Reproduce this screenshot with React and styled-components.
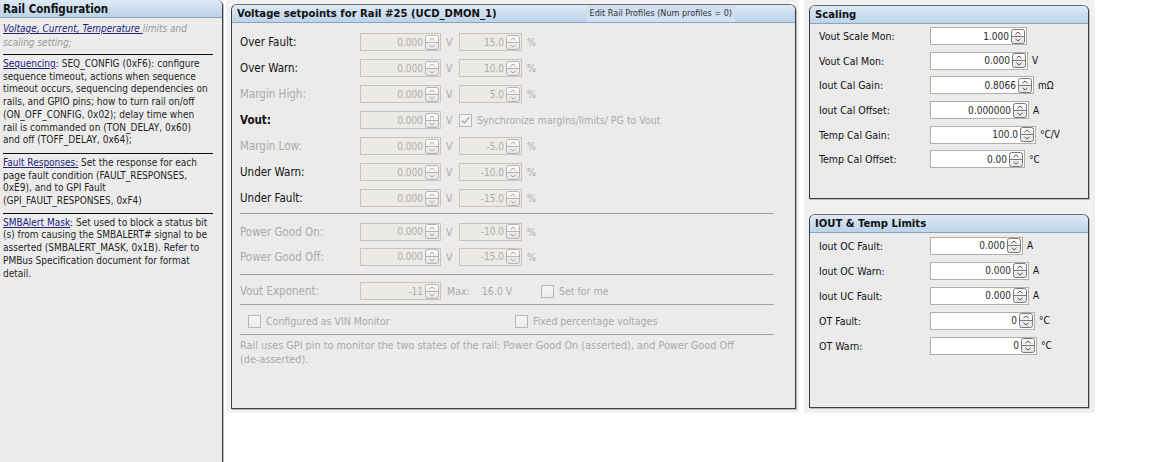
import styled, { createGlobalStyle } from "styled-components";

const GlobalStyle = createGlobalStyle`
  html, body { margin: 0; padding: 0; background: #fff; }
  body {
    font-family: "DejaVu Sans Condensed", "DejaVu Sans", sans-serif;
    font-size: 10px;
    color: #1a1a1a;
  }
`;

const Arrows = ({ disabled }) => {
  const c = disabled ? "#b4b4b4" : "#7a7a7a";
  const a = disabled ? "#a8a8a8" : "#555";
  const id = disabled ? "sgd" : "sge";
  return (
    <svg width="14" height="15" viewBox="0 0 14 15">
      <defs>
        <linearGradient id={id} x1="0" y1="0" x2="0" y2="1">
          <stop offset="0" stopColor="#fdfdfd" />
          <stop offset="1" stopColor="#e2e2e2" />
        </linearGradient>
      </defs>
      <rect x="0.5" y="0.5" width="13" height="14" rx="2" fill={`url(#${id})`} stroke={c} />
      <line x1="1" y1="7.5" x2="13" y2="7.5" stroke={c} />
      <path d="M4.5 5.2 L7 3 L9.5 5.2" fill="none" stroke={a} strokeWidth="1" />
      <path d="M4.5 9.8 L7 12 L9.5 9.8" fill="none" stroke={a} strokeWidth="1" />
    </svg>
  );
};

const Spin = ({ value, width, disabled }) => (
  <SpinBox $w={width} $disabled={disabled}>
    <span>{value}</span>
    <Arrows disabled={disabled} />
  </SpinBox>
);

const Check = ({ checked }) => (
  <CheckBox>
    {checked && (
      <svg width="11" height="11" viewBox="0 0 11 11">
        <path d="M2 5.5 L4.5 8 L9 2.5" fill="none" stroke="#a8a8a8" strokeWidth="1.3" />
      </svg>
    )}
  </CheckBox>
);

const voltRows = [
  { label: "Over Fault:", pct: "15.0" },
  { label: "Over Warn:", pct: "10.0" },
  { label: "Margin High:", pct: "5.0", off: true },
  { label: "Vout:", vout: true },
  { label: "Margin Low:", pct: "-5.0", off: true },
  { label: "Under Warn:", pct: "-10.0" },
  { label: "Under Fault:", pct: "-15.0" },
];

const pgRows = [
  { label: "Power Good On:", pct: "-10.0" },
  { label: "Power Good Off:", pct: "-15.0" },
];

const scaling = [
  { label: "Vout Scale Mon:", value: "1.000", w: 97, unit: "" },
  { label: "Vout Cal Mon:", value: "0.000", w: 98, unit: "V" },
  { label: "Iout Cal Gain:", value: "0.8066", w: 104, unit: "mΩ" },
  { label: "Iout Cal Offset:", value: "0.000000", w: 99, unit: "A" },
  { label: "Temp Cal Gain:", value: "100.0", w: 106, unit: "°C/V" },
  { label: "Temp Cal Offset:", value: "0.00", w: 95, unit: "°C" },
];

const limits = [
  { label: "Iout OC Fault:", value: "0.000", w: 93, unit: "A" },
  { label: "Iout OC Warn:", value: "0.000", w: 99, unit: "A" },
  { label: "Iout UC Fault:", value: "0.000", w: 99, unit: "A" },
  { label: "OT Fault:", value: "0", w: 105, unit: "°C" },
  { label: "OT Warn:", value: "0", w: 107, unit: "°C" },
];

const App = () => {
  return (
    <>
      <GlobalStyle />
      <Page>
        <LeftPanel>
          <Header>Rail Configuration</Header>
          <LeftBody>
            <Note $lh={14} $pb={4}>
              <Italic>
                <Link>Voltage, Current, Temperature </Link>
                <Faint>limits and scaling setting;</Faint>
              </Italic>
            </Note>
            <Rule />
            <Note>
              <Link>Sequencing</Link>: SEQ_CONFIG (0xF6): configure sequence
              timeout, actions when sequence timeout occurs, sequencing
              dependencies on rails, and GPIO pins; how to turn rail on/off
              (ON_OFF_CONFIG, 0x02); delay time when rail is commanded on
              (TON_DELAY, 0x60) and off (TOFF_DELAY, 0x64);
            </Note>
            <Rule />
            <Note $pb={5}>
              <Link>Fault Responses:</Link> Set the response for each page
              fault condition (FAULT_RESPONSES, 0xE9), and to GPI Fault
              (GPI_FAULT_RESPONSES, 0xF4)
            </Note>
            <Rule />
            <Note>
              <Link>SMBAlert Mask</Link>: Set used to block a status bit (s)
              from causing the SMBALERT# signal to be asserted (SMBALERT_MASK,
              0x1B). Refer to PMBus Specification document for format detail.
            </Note>
          </LeftBody>
        </LeftPanel>

        <MiddleArea>
          <Panel $w={565} $h={405}>
            <Header>
              <span>Voltage setpoints for Rail #25 (UCD_DMON_1)</span>
              <HeaderButton>Edit Rail Profiles (Num profiles = 0)</HeaderButton>
            </Header>
            <VoltBody>
              {voltRows.map((r) => (
                <VRow key={r.label}>
                  <VLabel $off={r.off} $bold={r.vout}>{r.label}</VLabel>
                  <Spin value="0.000" width={81} disabled />
                  <Unit $off>V</Unit>
                  {r.vout ? (
                    <CheckLine $off>
                      <Check checked />
                      Synchronize margins/limits/ PG to Vout
                    </CheckLine>
                  ) : (
                    <>
                      <Spin value={r.pct} width={63} disabled />
                      <Unit $off>%</Unit>
                    </>
                  )}
                </VRow>
              ))}
              <Separator $mt={2} $mb={5} />
              {pgRows.map((r) => (
                <VRow key={r.label} $h={25}>
                  <VLabel $off>{r.label}</VLabel>
                  <Spin value="0.000" width={81} disabled />
                  <Unit $off>V</Unit>
                  <Spin value={r.pct} width={63} disabled />
                  <Unit $off>%</Unit>
                </VRow>
              ))}
              <Separator $mt={5} $mb={4} />
              <VRow $h={24}>
                <VLabel $off>Vout Exponent:</VLabel>
                <Spin value="-11" width={81} disabled />
                <MaxText>
                  <span>Max:</span>
                  <span>16.0 V</span>
                </MaxText>
                <CheckLine $off>
                  <Check />
                  Set for me
                </CheckLine>
              </VRow>
              <Separator $mt={1} $mb={4} />
              <OptionRow>
                <CheckLine $off $w={267}>
                  <Check />
                  Configured as VIN Monitor
                </CheckLine>
                <CheckLine $off>
                  <Check />
                  Fixed percentage voltages
                </CheckLine>
              </OptionRow>
              <Separator $mt={1} $mb={4} />
              <Remark>
                Rail uses GPI pin to monitor the two states of the rail: Power
                Good On (asserted), and Power Good Off{" "}
                <NoWrap>(de-asserted).</NoWrap>
              </Remark>
            </VoltBody>
          </Panel>
        </MiddleArea>

        <RightArea>
          <Panel $w={280} $h={194}>
            <Header>Scaling</Header>
            <FormBody>
              {scaling.map((r) => (
                <FRow key={r.label} $h={24.6}>
                  <FLabel>{r.label}</FLabel>
                  <Spin value={r.value} width={r.w} />
                  <FUnit>{r.unit}</FUnit>
                </FRow>
              ))}
            </FormBody>
          </Panel>
          <Panel $w={280} $h={194}>
            <Header>IOUT &amp; Temp Limits</Header>
            <FormBody>
              {limits.map((r) => (
                <FRow key={r.label}>
                  <FLabel>{r.label}</FLabel>
                  <Spin value={r.value} width={r.w} />
                  <FUnit>{r.unit}</FUnit>
                </FRow>
              ))}
            </FormBody>
          </Panel>
        </RightArea>
      </Page>
    </>
  );
};

const Page = styled.div`
  display: flex;
  align-items: flex-start;
  width: 1153px;
  height: 462px;
  overflow: hidden;
  background: #fff;
`;

const Header = styled.div`
  display: flex;
  align-items: center;
  justify-content: space-between;
  height: 18px;
  padding-left: 5px;
  box-sizing: border-box;
  background: linear-gradient(#dde9f6, #bcd3ea);
  border-bottom: 1px solid #8aa3bb;
  font-weight: bold;
  font-size: 11.2px;
  color: #111;
  border-top-left-radius: 5px;
  border-top-right-radius: 5px;
`;

const HeaderButton = styled.span`
  font-weight: normal;
  font-size: 9px;
  color: #333;
  height: 17px;
  line-height: 17px;
  padding: 0 3px;
  margin-right: 60px;
  background: #cfe0f1;
`;

const LeftPanel = styled.section`
  width: 222px;
  height: 462px;
  flex-shrink: 0;
  background: #ececec;
  border-right: 1px solid #3c3c3c;
  box-shadow: 1px 0 0 #bdbdbd;
  border-top-right-radius: 6px;
  ${Header} {
    border-top-left-radius: 0;
    font-size: 11.5px;
    padding-left: 3px;
  }
`;

const LeftBody = styled.div`
  padding: 4px 12px 0 3px;
`;

const Note = styled.p`
  margin: 0;
  padding: 0 0 ${(p) => p.$pb ?? 6}px;
  line-height: ${(p) => p.$lh || 12.7}px;
  font-size: 10px;
  color: #1e1e1e;
`;

const Italic = styled.span`
  font-style: italic;
`;

const Link = styled.span`
  color: #22227a;
  text-decoration: underline;
`;

const Faint = styled.span`
  color: #9a9a9a;
`;

const Rule = styled.hr`
  margin: 0 0 3px;
  border: none;
  border-top: 1px solid #111;
  width: 210px;
`;

const MiddleArea = styled.div`
  width: 573px;
  height: 413px;
  margin-left: 3px;
  padding: 4px 0 0 5px;
  box-sizing: border-box;
  background: #f1f1f1;
  flex-shrink: 0;
`;

const RightArea = styled.div`
  width: 291px;
  height: 413px;
  margin-left: 5px;
  padding: 5px 0 0 5px;
  box-sizing: border-box;
  background: #f0f0f0;
  display: flex;
  flex-direction: column;
  gap: 15px;
  flex-shrink: 0;
`;

const Panel = styled.section`
  width: ${(p) => p.$w}px;
  height: ${(p) => p.$h}px;
  box-sizing: border-box;
  background: #ebebeb;
  border: 1px solid #3f3f3f;
  border-top-color: #6d6d6d;
  border-radius: 6px 6px 0 0;
  box-shadow: 1px 1px 0 #bcbcbc;
`;

const VoltBody = styled.div`
  padding: 6px 0 0 8px;
  width: 534px;
`;

const VRow = styled.div`
  display: flex;
  align-items: center;
  height: ${(p) => p.$h || 26}px;
`;

const VLabel = styled.span`
  width: 120px;
  flex-shrink: 0;
  font-size: 11.5px;
  font-weight: ${(p) => (p.$bold ? "bold" : "normal")};
  color: ${(p) => (p.$off ? "#aaaaaa" : "#111")};
`;

const SpinBox = styled.span`
  display: inline-flex;
  align-items: center;
  justify-content: flex-end;
  gap: 2px;
  width: ${(p) => p.$w}px;
  height: 18px;
  box-sizing: border-box;
  padding: 0 1px 0 4px;
  border: 1px solid ${(p) => (p.$disabled ? "#cdc3b9" : "#b9ada2")};
  background: ${(p) => (p.$disabled ? "#eceae7" : "#fff")};
  color: ${(p) => (p.$disabled ? "#acacac" : "#2a2a2a")};
  font-size: 10px;
  flex-shrink: 0;
  svg {
    display: block;
  }
`;

const Unit = styled.span`
  width: 18px;
  padding-left: 5px;
  box-sizing: border-box;
  font-size: 10.5px;
  color: ${(p) => (p.$off ? "#aaaaaa" : "#111")};
  flex-shrink: 0;
`;

const CheckLine = styled.label`
  display: inline-flex;
  align-items: center;
  gap: 5px;
  width: ${(p) => (p.$w ? `${p.$w}px` : "auto")};
  font-size: 10.5px;
  color: ${(p) => (p.$off ? "#aaaaaa" : "#111")};
  white-space: nowrap;
`;

const CheckBox = styled.span`
  display: inline-flex;
  align-items: center;
  justify-content: center;
  width: 13px;
  height: 13px;
  box-sizing: border-box;
  border: 1px solid #b8b8b8;
  background: linear-gradient(#f6f6f6, #ececec);
`;

const MaxText = styled.span`
  display: flex;
  gap: 12px;
  width: 100px;
  padding-left: 6px;
  box-sizing: border-box;
  font-size: 10.5px;
  color: #aaaaaa;
  white-space: nowrap;
`;

const Separator = styled.div`
  height: 1px;
  width: 534px;
  margin: ${(p) => p.$mt}px 0 ${(p) => p.$mb}px;
  background: #a3a3a3;
`;

const OptionRow = styled.div`
  display: flex;
  align-items: center;
  height: 24px;
  padding-left: 8px;
`;

const Remark = styled.p`
  margin: 2px 0 0;
  font-size: 10.8px;
  line-height: 14px;
  color: #aaaaaa;
  width: 534px;
`;

const NoWrap = styled.span`
  white-space: nowrap;
`;

const FormBody = styled.div`
  padding: 0 0 0 9px;
`;

const FRow = styled.div`
  display: flex;
  align-items: center;
  height: ${(p) => p.$h || 25}px;
`;

const FLabel = styled.span`
  width: 111px;
  flex-shrink: 0;
  font-size: 10.5px;
  color: #111;
`;

const FUnit = styled.span`
  padding-left: 4px;
  font-size: 10px;
  color: #111;
`;

export default App;
